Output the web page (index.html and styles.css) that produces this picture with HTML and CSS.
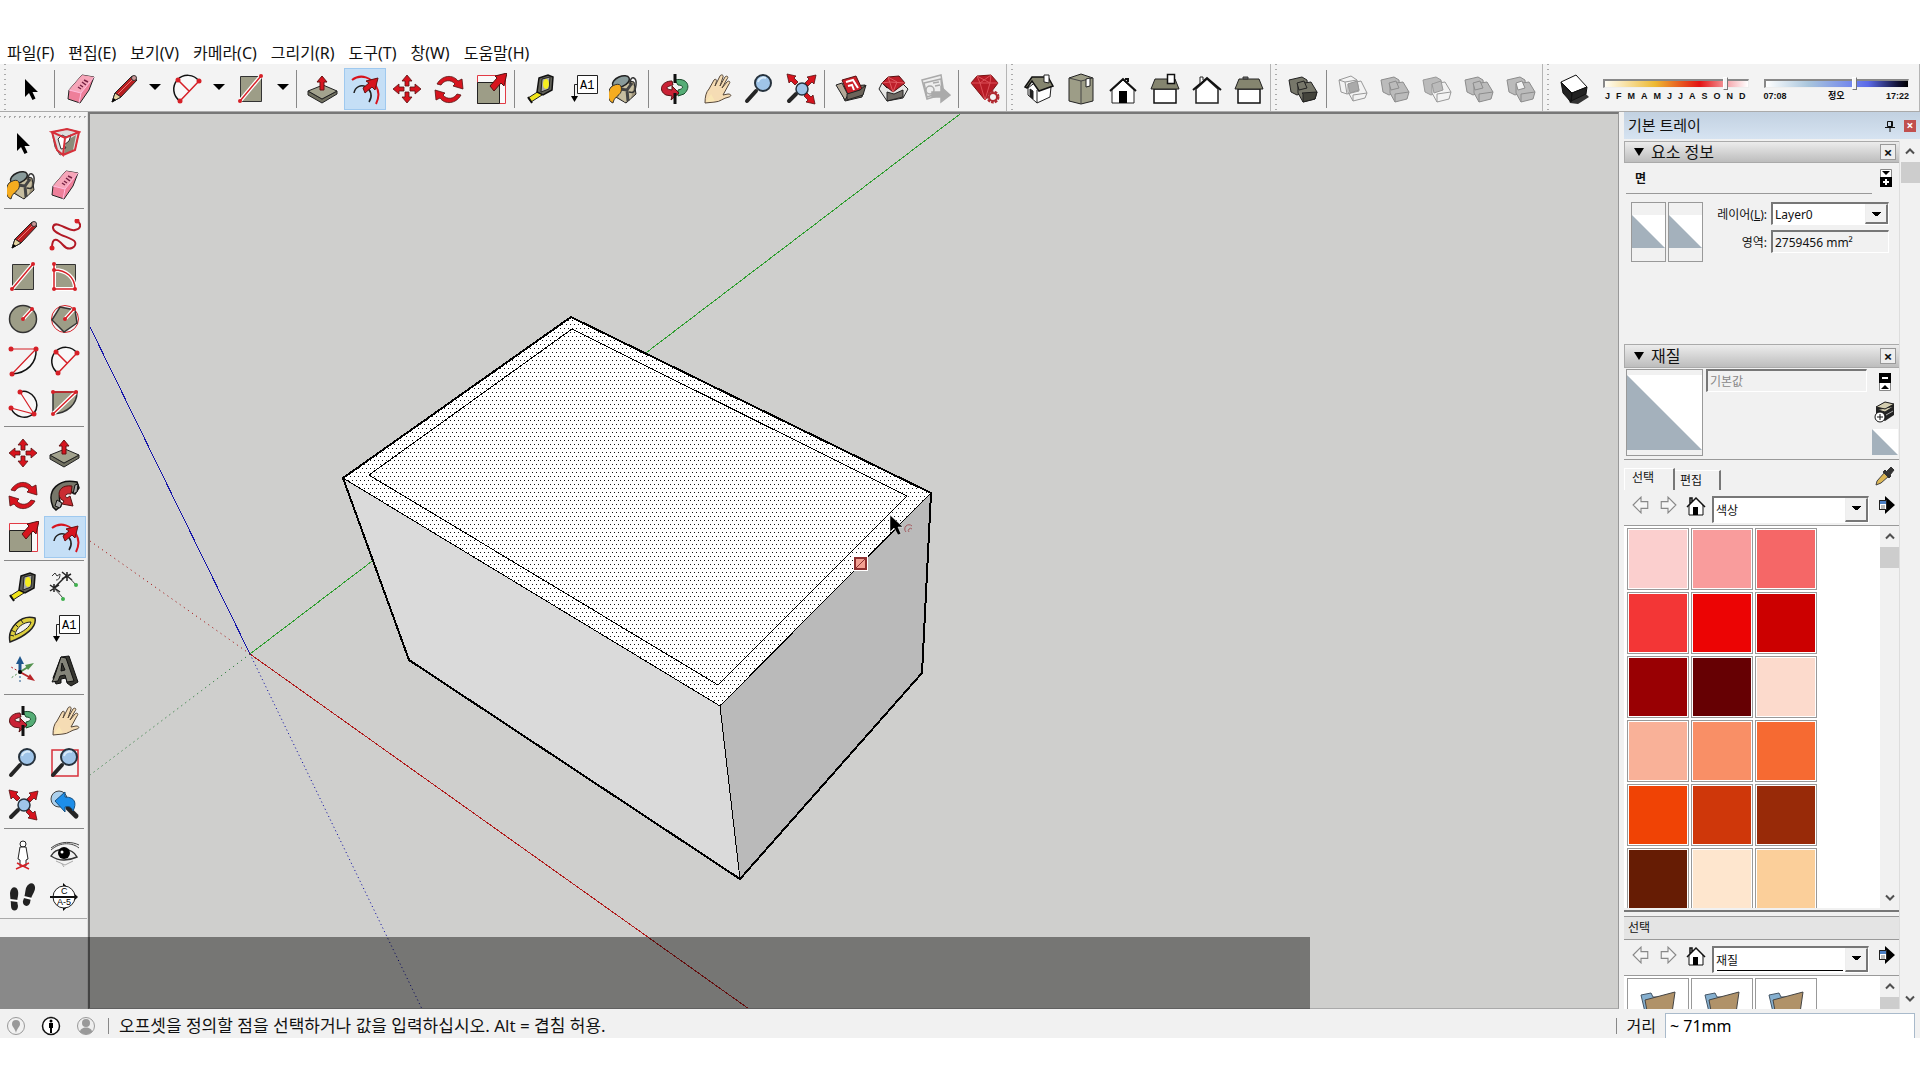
FILE: index.html
```html
<!DOCTYPE html>
<html lang="ko">
<head>
    <meta charset="UTF-8">
    <meta name="viewport" content="width=device-width, initial-scale=1.0">
    <title>SketchUp</title>
    <link rel="stylesheet" href="styles.css">
</head>
<body>
    <!-- icon sprite -->
    <svg class="sprite" aria-hidden="true">
        <symbol id="i-select" viewBox="0 0 32 32"><path d="M10 6v18l4-4 3.500 7 3-1.500-3-6.500h5.500z"/></symbol>
        <symbol id="i-eraser" viewBox="0 0 32 32">
            <path d="M4 17 17 2l12 2-5 13-9 13-12-4z" fill="#ee7f9a" stroke="#222"/>
            <path d="M4 17 17 2l12 2-13 16z" fill="#f6a6b9"/><path d="m4 17 12 3-2 10M16 20 29 4" fill="none" stroke="#fbd"/>
            <path d="m13 14 3 2m-1-4 3 2m-1-5 4 3m-2-5 4 2" stroke="#724" stroke-width="1.500"/>
        </symbol>
        <symbol id="i-pencil" viewBox="0 0 32 32">
            <path d="m5 29 3-9L25 3l5 4-16 17z" fill="#b81e20" stroke="#222"/><path d="m5 29 3-9 6 4z" fill="#e3d3a0" stroke="#222"/>
            <path d="m5 29 1.500-4 2.500 2z"/><path d="m11 21 15-15" stroke="#e77"/><circle cx="27" cy="5" r="2.500" fill="#c99" stroke="#333"/>
        </symbol>
        <symbol id="i-arc" viewBox="0 0 32 32">
            <path d="M9 28A14 14 0 1 1 28 8" fill="#fff" fill-opacity=".4" stroke="#111" stroke-width="1.500"/>
            <path d="M9 28 28 8M7 7l11 11" stroke="#d62027" stroke-width="1.500" fill="none"/>
            <g fill="#d62027"><circle cx="9" cy="28" r="2.500"/><circle cx="28" cy="8" r="2.500"/><circle cx="7" cy="7" r="2.500"/></g>
        </symbol>
        <symbol id="i-rect" viewBox="0 0 32 32">
            <path d="M5.500 3.500h21v25h-21z" fill="#9d9d87" stroke="#333"/><path d="m5 28 21-25" stroke="#fff" stroke-width="4"/>
            <path d="m5 28 21-25" stroke="#d62027" stroke-width="1.500"/><g fill="#d62027"><circle cx="5" cy="28" r="2"/><circle cx="26" cy="3" r="2"/></g>
        </symbol>
        <symbol id="i-push" viewBox="0 0 32 32">
            <path d="M1 18v4l14 8 15-9v-3l-15 8z" fill="#707060" stroke="#222"/><path d="m1 18 15-6 14 6-15 8z" fill="#a3a38e" stroke="#222"/>
            <path d="m15 3 5 6h-3v8h-4V9h-3z" fill="#d7141e" stroke="#611"/>
        </symbol>
        <symbol id="i-offset" viewBox="0 0 32 32">
            <path d="M3 7C12 0 23 5 27 13c3 5 3 12 0 18" fill="none" stroke="#d7141e" stroke-width="2"/>
            <path d="M5 20c1-6 7-9 12-6s7 9 3 15" fill="none" stroke="#222" stroke-width="1.500"/>
            <path d="m14 15 6-5-3-2 12-3-3 12-3-3-7 6z" fill="#d7141e" stroke="#611"/>
        </symbol>
        <symbol id="i-move" viewBox="0 0 32 32">
            <g fill="#d7141e" stroke="#511" stroke-width=".8"><path id="mv" d="m16 2 5 6h-3v5h-4V8h-3z"/><use href="#mv" transform="rotate(90 16 16)"/><use href="#mv" transform="rotate(180 16 16)"/><use href="#mv" transform="rotate(270 16 16)"/></g>
        </symbol>
        <symbol id="i-rotate" viewBox="0 0 32 32">
            <g fill="#d7141e" stroke="#511" stroke-width=".8"><path id="rt" d="M4 11C9 2 20 1 25 8l4-2 1 10-10-3 2-2C18 6 11 7 8 12z"/><use href="#rt" transform="rotate(180 16 16.500)"/></g>
        </symbol>
        <symbol id="i-scale" viewBox="0 0 32 32">
            <path d="M2.500 2.500h28v28h-28z" fill="#fff" fill-opacity=".5" stroke="#e23b45"/><path d="M2.500 9.500h22v21h-22z" fill="#9d9d87" stroke="#222"/>
            <path d="m15 13 7-8-2-2 12-3-3 13-3-3-7 8z" fill="#d7141e" stroke="#511"/>
        </symbol>
        <symbol id="i-tape" viewBox="0 0 32 32">
            <path d="M3 25 14 18l3 4L6 29z" fill="#f0e419" stroke="#222"/><path d="m14 5 9-3 5 2-1 13-9 5-6-3z" fill="#606057" stroke="#111" stroke-width="1.500"/>
            <path d="m17 6 8-2-1 12-8 3z" fill="#aaa" stroke="#222"/><ellipse cx="21" cy="11" rx="3" ry="5" fill="#f5ed20"/><path d="m3 24 4 6" stroke="#111" stroke-width="2"/>
        </symbol>
        <symbol id="i-text" viewBox="0 0 32 32">
            <path d="M10.500 2.500h20v18h-20z" fill="#fff" stroke="#222"/><path d="M10 11.500H7.500V26" fill="none" stroke="#222"/><path d="M4 23h7l-3.500 6z"/>
            <text x="13" y="16" class="icon-letters">A1</text>
        </symbol>
        <symbol id="i-paint" viewBox="0 0 32 32">
            <g transform="translate(-3 1)">
                <path d="m14 5 14 3 2 12-10 9-12-7z" fill="#9d9278" stroke="#222"/><path d="M20 9 28 12 25 24l-6 4-7-5z" fill="#c7bea0"/><path d="m13 15 8 1 5-7m-5 7 1 11" fill="none" stroke="#444" stroke-width="3"/>
                <ellipse cx="15" cy="8" rx="9" ry="5" transform="rotate(-24 14 8)" fill="#899b9b" stroke="#222" stroke-width="1.500"/>
                <path d="M5 13c7-5 12-3 10 5-2 4-7 5-8 11-6-2-6-11-2-16z" fill="#f6ac1f" stroke="#333"/><path d="M24 10c0-10 7-7 6 1s-3 8-7 7" fill="none" stroke="#333" stroke-width="1.500"/>
            </g>
        </symbol>
        <symbol id="i-orbit" viewBox="0 0 32 32">
            <path d="M16 7c12-3 17 7 9 14l-6 2v-6c6-1 6-5 0-5z" fill="#55ad76" stroke="#174a29"/>
            <path d="M13 8C2 8-1 18 7 22l6 1-1 4 8-7-7-7v4c-7-1-7-3 1-5z" fill="#c92235" stroke="#511"/>
            <path d="M16 1v9m0 10v11" stroke="#111" stroke-width="3"/>
        </symbol>
        <symbol id="i-pan" viewBox="0 0 32 32">
            <path d="M4 30c0-6 1-11 4-14l5-9c2-2 3 0 2 3l-1 3 5-10c1-2 4-1 3 1l-3 9 5-9c2-2 4 0 2 2l-5 9 5-6c2-2 4 0 2 2l-6 11 5-1c3 0 4 2 1 3-6 1-9 5-14 5z" fill="#f5dcb4" stroke="#554739"/><path d="m5 29 9-1-4-7z" fill="#f9e6b4"/>
        </symbol>
        <symbol id="i-zoom" viewBox="0 0 32 32">
            <path d="m4 28 9-10" stroke="#252525" stroke-width="4" stroke-linecap="round"/><circle cx="20" cy="10" r="8" fill="#9fc4e8" stroke="#26323d" stroke-width="2"/><path d="M15 9c1-4 5-5 8-4" fill="none" stroke="#d8ebfa" stroke-width="2"/>
        </symbol>
        <symbol id="i-extents" viewBox="0 0 32 32">
            <path d="m4 28 7-7" stroke="#252525" stroke-width="4" stroke-linecap="round"/><circle cx="17" cy="16" r="6" fill="#9fc4e8" stroke="#26323d" stroke-width="1.500"/>
            <g fill="#d7141e" stroke="#511" stroke-width=".8"><path id="ex" d="m31 2-2 9-2-2-4 4-3-3 4-4-2-2z"/><use href="#ex" transform="rotate(90 16 16)"/><use href="#ex" transform="rotate(-90 16 16)"/></g>
        </symbol>
        <symbol id="i-warehouse" viewBox="0 0 32 32">
            <path d="m4 14 6 14 17-4 3-12z" fill="#796e62" stroke="#222"/><path d="m7 7 14-4 6 13-14 6z" fill="#cc2029" stroke="#511"/><path d="m11 9 7-2 5 8M13 13l4-1 2 5" fill="none" stroke="#fff" stroke-width="2"/>
            <path d="m1 12 6-2 6 12-3 5z" fill="#b4a998" stroke="#222"/><path d="m12 21 13-4 6-5-3 10-16 5z" fill="#6c645a" stroke="#222"/>
        </symbol>
        <symbol id="i-extwarehouse" viewBox="0 0 32 32">
            <path d="m2 16 3-6 5 5 14-6 7 7-5 9-16 3z" fill="#e7e7e5" stroke="#222"/><path d="m5 10 6-6 11-1 6 7-12 9z" fill="#bf1f2a" stroke="#511"/><path d="m5 10 8-1 15 1M11 4l5 15 4-10z" fill="none" stroke="#e0595f"/>
            <path d="m10 19 7 2 9-4v7l-16 4z" fill="#6f6a64" stroke="#222"/>
        </symbol>
        <symbol id="i-layout" viewBox="0 0 32 32">
            <g fill="#eee" stroke="#aaa" stroke-width="1.500"><path d="m3 7 19-5 3 19-17 5z"/><path d="m5 10 17-4 1 13-15 5z"/><circle cx="11" cy="17" r="4"/><path d="m14 10 6-1m-4 4 5-1"/><path d="M13 19h9v-5l9 8-9 7v-5h-9z" fill="#aaa"/></g>
        </symbol>
        <symbol id="i-gem" viewBox="0 0 32 32">
            <path d="m2 10 6-7 14-1 7 8-13 17z" fill="#b61b25" stroke="#711"/><path d="M2 10h27M8 3l3 7 5 17 5-17 1-8M8 3l13 7M22 2 11 10" fill="none" stroke="#dc5058"/>
            <circle cx="24" cy="24" r="5" fill="#f2f2f2" stroke="#b02a31" stroke-width="3" stroke-dasharray="2.500 1"/><circle cx="24" cy="24" r="4" fill="none" stroke="#b02a31" stroke-width="2"/>
        </symbol>
        <symbol id="i-iso" viewBox="0 0 32 32">
            <path d="m5 15 9-7 14 6-1 10-13 6-9-8z" fill="#fff" stroke="#222"/><path d="M14 17v13M7 16l3 2v8l-3-3z" fill="#222" stroke="#222"/>
            <path d="M2 14 9 4h16l5 9-14 5-7-10-5 7z" fill="#85856f" stroke="#111" stroke-width="1.500"/><path d="M21 2h5v8l-5-1z" fill="#fff" stroke="#222"/>
        </symbol>
        <symbol id="i-top" viewBox="0 0 32 32"><path d="m4 5 12-4 12 4v23l-12 3-12-3z" fill="#9d9d87" stroke="#222"/><path d="m4 5 12 3v23m0-23 12-3" fill="none" stroke="#444"/><path d="m21 6 4-1v8l-4 1z" fill="#fff" stroke="#222"/></symbol>
        <symbol id="i-front" viewBox="0 0 32 32"><path d="M5 17 16 7l11 10v13H5z" fill="#fff" stroke="#222"/><path d="m3 18 13-12 13 12M21 9V6h-3" fill="none" stroke="#111" stroke-width="2"/><path d="M12 18h8v12h-8z"/></symbol>
        <symbol id="i-right" viewBox="0 0 32 32"><path d="M5 16h22v14H5z" fill="#fff" stroke="#111" stroke-width="1.500"/><path d="M6 6h20l4 10H2z" fill="#85856f" stroke="#222"/><path d="M18.500 1.500h7v9h-7z" fill="#fff" stroke="#111" stroke-width="1.500"/></symbol>
        <symbol id="i-back" viewBox="0 0 32 32"><path d="M5 16 16 6l11 10v14H5z" fill="#fff" stroke="#222" stroke-width="1.500"/><path d="m2 17 14-12 14 12" fill="none" stroke="#111" stroke-width="2"/><path d="M9 10V4h3v3" fill="#fff" stroke="#222"/></symbol>
        <symbol id="i-left" viewBox="0 0 32 32"><path d="M5 16h22v14H5z" fill="#fff" stroke="#111" stroke-width="1.500"/><path d="M6 6h20l4 10H2z" fill="#85856f" stroke="#222"/><path d="M10 4h5v2h-5z" fill="#777" stroke="#333"/></symbol>
        <symbol id="i-solid" viewBox="0 0 32 32"><g stroke="#222" fill="#77776a"><path d="m2 7 13-3 5 3 1 11-11 4-6-3z"/><path d="m11 11 13-2 6 10-2 7-12 3-5-9z"/><path d="m16 21-1-1 15-1-2 7-12 3z" fill="#44443c"/><path d="m10 10 7-2 3 7-8 2z"/></g></symbol>
        <symbol id="i-solid-wire" viewBox="0 0 32 32"><g stroke="#999" fill="none"><path d="m2 7 12-4 6 4 2 11-12 3-6-2zM2 7l6 2 12-2M8 9l2 12"/><path d="m11 11 13-3 6 12-2 5-12 3-5-9zM16 22l14-2M16 22v6"/><path d="m11 11 9-3 2 9-9 3z" fill="#aaa"/></g></symbol>
        <symbol id="i-solid-gray" viewBox="0 0 32 32"><g stroke="#8c8c8c" fill="#bbb"><path d="m2 7 13-3 5 3 1 11-11 4-6-3z"/><path d="m11 11 13-2 6 10-2 7-12 3-5-9z"/><path d="m16 21 14-2M16 21v8M10 10l7-2 3 7-8 2z"/></g></symbol>
        <symbol id="i-solid-hole" viewBox="0 0 32 32"><g stroke="#8c8c8c" fill="#bbb"><path d="m2 7 13-3 5 3 1 11-11 4-6-3z"/><path d="m11 11 13-2 6 10-2 7-12 3-5-9z"/><path d="m16 21 14-2M16 21v8"/><path d="m11 10 6-2 3 7-7 2z" fill="#f3f3f3"/></g></symbol>
        <symbol id="i-solid-cut" viewBox="0 0 32 32"><g stroke="#999" fill="#bbb"><path d="m2 7 13-3 5 3 1 11-11 4-6-3z"/><path d="m11 11 13-2 6 10-2 7-12 3-5-9z" fill="#f3f3f3"/><path d="m11 11 9-3 2 9-9 3zM16 21l14-2M16 21v8"/></g></symbol>
        <symbol id="i-shadow" viewBox="0 0 32 32"><path d="m2 10 9 20 8 1 11-7-5-5-12-1z" fill="#333"/><path d="m2 9 15-7 11 12-15 6z" fill="#fff" stroke="#111"/><path d="m2 9 2 11 8 9 1-8zM13 20l15-6-1 7-15 7z" fill="#222" stroke="#111"/></symbol>
        <symbol id="i-component" viewBox="0 0 32 32"><path d="m3 5 15-3 12 3-4 18-15 5-5-8z" fill="#ddd" stroke="#555"/><path d="m17 14 10-6-3 15-9 4z" fill="#8b8b79"/><path d="m9 12 4-4 4 2 5-2-2 6-5 4 2 3-5 1z" fill="#fff" stroke="#333"/><path d="m3 5 15-3 12 3-14 6zM3 5l5 18 6 5 2-17M30 5l-4 18-12 5" fill="none" stroke="#d7303a" stroke-width="2"/></symbol>
        <symbol id="i-freehand" viewBox="0 0 32 32"><path d="M3 29C3 18 8 19 14 26s14 2 12-3S3 16 4 8c2-8 16 5 22 3 6-1 7-6 2-9" fill="none" stroke="#b21925" stroke-width="2"/><g fill="#d62027"><circle cx="3" cy="29" r="2.500"/><circle cx="28" cy="2" r="2.500"/></g></symbol>
        <symbol id="i-rrect" viewBox="0 0 32 32"><path d="M5.500 3.500h21v25h-21z" fill="#9d9d87" stroke="#333"/><path d="M5 3v25h21M5 9c12 0 21 7 21 19" fill="none" stroke="#fff" stroke-width="4"/><path d="M5 3v25h21M5 9c12 0 21 7 21 19" fill="none" stroke="#d62027" stroke-width="1.500"/><g fill="#d62027"><circle cx="5" cy="3" r="2"/><circle cx="5" cy="9" r="2"/><circle cx="5" cy="28" r="2"/><circle cx="26" cy="28" r="2"/></g></symbol>
        <symbol id="i-circle" viewBox="0 0 32 32"><circle cx="16" cy="16" r="13.500" fill="#9d9d87" stroke="#333" stroke-width="1.500"/><path d="m16 16 9-10" stroke="#fff" stroke-width="4"/><path d="m16 16 9-10" stroke="#d62027" stroke-width="1.500"/><g fill="#d62027"><circle cx="16" cy="16" r="2"/><circle cx="25" cy="6" r="2"/></g></symbol>
        <symbol id="i-polygon" viewBox="0 0 32 32"><circle cx="16" cy="16" r="13.500" fill="none" stroke="#d62027"/><path d="m11 4 15 3 2 13-13 9L3 17z" fill="#9d9d87" stroke="#333" stroke-width="1.500"/><path d="m16 16 9-10" stroke="#fff" stroke-width="4"/><path d="m16 16 9-10" stroke="#d62027" stroke-width="1.500"/><g fill="#d62027"><circle cx="16" cy="16" r="2"/><circle cx="25" cy="6" r="2"/></g></symbol>
        <symbol id="i-arc2" viewBox="0 0 32 32"><path d="M29 4c1 14-9 24-24 25" fill="#fff" fill-opacity=".4" stroke="#111" stroke-width="1.500"/><path d="M4 4h25L5 29" fill="none" stroke="#d62027" stroke-width="1.200"/><g fill="#d62027"><circle cx="4" cy="4" r="2.500"/><circle cx="29" cy="4" r="2.500"/><circle cx="5" cy="29" r="2.500"/></g></symbol>
        <symbol id="i-arc3" viewBox="0 0 32 32"><path d="M13 5c12-4 22 12 14 21-7 7-19 5-23-5" fill="#fff" fill-opacity=".4" stroke="#111" stroke-width="1.500"/><path d="M13 5l14 22L4 21" fill="none" stroke="#d62027" stroke-width="1.200"/><g fill="#d62027"><circle cx="13" cy="5" r="2.500"/><circle cx="4" cy="21" r="2.500"/><circle cx="27" cy="27" r="2.500"/></g></symbol>
        <symbol id="i-pie" viewBox="0 0 32 32"><path d="M4 5h24c0 12-9 21-24 22z" fill="#9d9d87" stroke="#333" stroke-width="1.500"/><path d="M27 5 4 27" fill="none" stroke="#fff" stroke-width="4"/><path d="M4 5h23L4 27" fill="none" stroke="#d62027" stroke-width="1.500"/><g fill="#d62027"><circle cx="4" cy="5" r="2"/><circle cx="27" cy="5" r="2"/><circle cx="4" cy="27" r="2"/></g></symbol>
        <symbol id="i-follow" viewBox="0 0 32 32"><path d="M4 28C-3 11 10-1 28 3l2 6-4 6-9-5c-7 2-8 7-5 17l-5 4z" fill="#77776a" stroke="#111" stroke-width="1.500"/><path d="m6 27 2-6 5 3-2 5zM26 6l3-1-1 8-4 2z" fill="#aaa" stroke="#111"/><path d="M23 7C8 5 7 19 15 22l-2 3 11 2-3-10-3 2c-3-2-1-5 4-4z" fill="#c92c32" stroke="#511"/></symbol>
        <symbol id="i-dimension" viewBox="0 0 32 32"><path d="m5 17 13-13M1 14l10 7M1 20l9-6M5 13v8M13 1l10 8M13 8l9-5M18 1v9" stroke="#222" stroke-width="1.500"/><path d="m5 17 9 10M18 4l9 10" stroke="#444"/><g fill="#3fb04e"><circle cx="14" cy="28" r="2"/><circle cx="27" cy="14" r="2"/></g><path d="m3 5 3-3 2 3 3-2c0 5-2 6-4 6" fill="none" stroke="#333"/></symbol>
        <symbol id="i-protractor" viewBox="0 0 32 32"><path d="M3 29C0 15 14 1 28 5c2 9-9 18-25 24z" fill="#dcce3d" stroke="#222" stroke-width="1.500"/><path d="M8 22c1-7 8-13 16-13-1 5-8 10-16 13z" fill="#f2f2f2" stroke="#222"/><path d="m3 22 4 1m-3-6 4 2m0-8 3 3m3-7 2 3" stroke="#222"/></symbol>
        <symbol id="i-axes" viewBox="0 0 32 32"><path d="M13 17V7" stroke="#1e568d" stroke-width="3"/><path d="m9 9 4-8 4 8z" fill="#1e568d"/><path d="m13 17 8-5" stroke="#53924e" stroke-width="2"/><path d="m18 10 9-2-6 7z" fill="#53924e"/><path d="m13 17 9 5" stroke="#b82428" stroke-width="2"/><path d="m20 24 3-5 5 7z" fill="#b82428"/><path d="M13 17v12" stroke="#1e568d" stroke-dasharray="2 2"/><path d="M13 17 4 12" stroke="#b82428" stroke-dasharray="2 2"/><path d="m13 17-9 6" stroke="#53924e" stroke-dasharray="2 2"/><circle cx="13" cy="17" r="2"/></symbol>
        <symbol id="i-text3d" viewBox="0 0 32 32"><path d="m4 23 8-21 8-1 9 26-7 4-4-3-1-5-5 1v4l-5 1z" fill="#35352f" stroke="#111"/><path d="m5 23 7-21 5 1 8 23-7 1-2-7-5 1-2 5-6 1zM12 16l4-1-3-7z" fill="#85857a" stroke="#111" fill-rule="evenodd"/></symbol>
        <symbol id="i-zoomwin" viewBox="0 0 32 32"><path d="M3 3h26v26H3z" fill="none" stroke="#d7303a" stroke-width="1.500"/><path d="m4 28 9-10" stroke="#252525" stroke-width="4" stroke-linecap="round"/><circle cx="20" cy="10" r="8" fill="#9fc4e8" stroke="#26323d" stroke-width="2"/><path d="M15 9c1-4 5-5 8-4" fill="none" stroke="#d8ebfa" stroke-width="2"/></symbol>
        <symbol id="i-previous" viewBox="0 0 32 32"><path d="m19 19 8 8" stroke="#252525" stroke-width="5" stroke-linecap="round"/><circle cx="10" cy="10" r="8" fill="#acd0ec" stroke="#444"/><path d="m6 12 10-9v5c10 0 12 6 8 14-2-5-5-5-8-4v5z" fill="#1d8ee9" stroke="#145082"/></symbol>
        <symbol id="i-person" viewBox="0 0 32 32"><circle cx="16" cy="5" r="3" fill="#fff" stroke="#222"/><path d="m13 8-2 12 2 1v6h6v-6l2-1-2-12z" fill="#fff" stroke="#222"/><path d="m9 30 13-6M10 24l12 6" stroke="#d62027" stroke-width="1.500"/></symbol>
        <symbol id="i-eye" viewBox="0 0 32 32"><path d="M2 11C12 2 24 4 30 9M2 9C12 1 24 3 30 6" fill="none" stroke="#444"/><path d="M2 17C7 8 23 8 28 18c-9 4-17 5-26-1z" fill="#eee" stroke="#333" stroke-width="1.500"/><circle cx="15" cy="14" r="6"/><circle cx="13" cy="13" r="1.500" fill="#fff"/><path d="m7 22 9 4 8-4M15 28l-2-3" fill="none" stroke="#aaa"/></symbol>
        <symbol id="i-walk" viewBox="0 0 32 32"><g fill="#222"><path d="M3 12C4 3 13 5 11 15c-1 4-1 6 0 10 0 6-7 6-7 0 0-5-1-9-1-13z"/><path d="M19 7c4-9 12-4 8 4-3 6-3 6-4 11-2 5-8 3-7-2 2-5 2-9 3-13z"/></g><path d="m3 19 8 1M17 16l8 2" stroke="#fff" stroke-width="2"/></symbol>
        <symbol id="i-section" viewBox="0 0 32 32"><path d="m14 2 15 14-15 14z"/><circle cx="15" cy="16" r="11" fill="#fff" stroke="#222"/><path d="M1 16h27" stroke="#111" stroke-width="2"/><text x="12" y="13" class="tiny-letters">C</text><text x="8" y="24" class="tiny-letters">A-5</text></symbol>
        <symbol id="i-home" viewBox="0 0 20 20"><path d="M3 9v10h14V9l-7-7z" fill="#fff" stroke="#111"/><path d="m1 11 9-9 9 9M4 8V2h2v4" fill="none" stroke="#111" stroke-width="1.500"/><path d="M7 11h5v8H7z"/></symbol>
        <symbol id="i-prev" viewBox="0 0 16 16"><path d="m1 8 7-7v4h6v6H8v4z" fill="#f5f5f5" stroke="#888"/></symbol>
        <symbol id="i-next" viewBox="0 0 16 16"><path d="M15 8 8 1v4H2v6h6v4z" fill="#f5f5f5" stroke="#888"/></symbol>
        <symbol id="i-details" viewBox="0 0 18 18"><path d="M7 0v4H1v10h6v4l10-9z"/><path d="M1.500 4.500h7v9h-7z" fill="#fff" stroke="#222"/><path d="M2 5h6v3H2z" fill="#4b7fc4"/><path d="M3 10h4m-4 2h4" stroke="#777"/></symbol>
        <symbol id="i-up" viewBox="0 0 12 12"><path d="m2 8 4-4 4 4" fill="none" stroke="#505050" stroke-width="2"/></symbol>
        <symbol id="i-down" viewBox="0 0 12 12"><path d="m2 4 4 4 4-4" fill="none" stroke="#505050" stroke-width="2"/></symbol>
        <symbol id="i-folder" viewBox="0 0 40 40"><path d="m3 6 10-2 2 4h6v28H10z" fill="#85afcf" stroke="#456"/><path d="m7 11 30-8-5 35H12z" fill="#b09269" stroke="#444"/></symbol>
    </svg>

    <div class="app">
        <nav class="menubar">
            <button>파일(F)</button>
            <button>편집(E)</button>
            <button>보기(V)</button>
            <button>카메라(C)</button>
            <button>그리기(R)</button>
            <button>도구(T)</button>
            <button>창(W)</button>
            <button>도움말(H)</button>
        </nav>

        <header class="toolbars">
            <div class="toolbar">
                <button class="tool" aria-label="선택"><svg><use href="#i-select"/></svg></button>
                <span class="sep"></span>
                <button class="tool" aria-label="지우기"><svg><use href="#i-eraser"/></svg></button>
                <button class="tool" aria-label="선"><svg><use href="#i-pencil"/></svg></button>
                <button class="more" aria-label="선 도구 더 보기"></button>
                <button class="tool" aria-label="호"><svg><use href="#i-arc"/></svg></button>
                <button class="more" aria-label="호 도구 더 보기"></button>
                <button class="tool" aria-label="직사각형"><svg><use href="#i-rect"/></svg></button>
                <button class="more" aria-label="도형 더 보기"></button>
                <span class="sep"></span>
                <button class="tool" aria-label="밀기/끌기"><svg><use href="#i-push"/></svg></button>
                <button class="tool active" aria-label="오프셋"><svg><use href="#i-offset"/></svg></button>
                <button class="tool" aria-label="이동"><svg><use href="#i-move"/></svg></button>
                <button class="tool" aria-label="회전"><svg><use href="#i-rotate"/></svg></button>
                <button class="tool" aria-label="배율"><svg><use href="#i-scale"/></svg></button>
                <span class="sep"></span>
                <button class="tool" aria-label="줄자"><svg><use href="#i-tape"/></svg></button>
                <button class="tool" aria-label="텍스트"><svg><use href="#i-text"/></svg></button>
                <button class="tool" aria-label="페인트통"><svg><use href="#i-paint"/></svg></button>
                <span class="sep"></span>
                <button class="tool" aria-label="궤도"><svg><use href="#i-orbit"/></svg></button>
                <button class="tool" aria-label="이동 보기"><svg><use href="#i-pan"/></svg></button>
                <button class="tool" aria-label="확대/축소"><svg><use href="#i-zoom"/></svg></button>
                <button class="tool" aria-label="전체 보기"><svg><use href="#i-extents"/></svg></button>
                <span class="sep"></span>
                <button class="tool" aria-label="3D Warehouse"><svg><use href="#i-warehouse"/></svg></button>
                <button class="tool" aria-label="Extension Warehouse"><svg><use href="#i-extwarehouse"/></svg></button>
                <button class="tool" aria-label="LayOut" disabled><svg><use href="#i-layout"/></svg></button>
                <span class="sep"></span>
                <button class="tool" aria-label="확장 관리자"><svg><use href="#i-gem"/></svg></button>
            </div>
            <div class="toolbar">
                <button class="tool" aria-label="등각 투영"><svg><use href="#i-iso"/></svg></button>
                <button class="tool" aria-label="상단"><svg><use href="#i-top"/></svg></button>
                <button class="tool" aria-label="전면"><svg><use href="#i-front"/></svg></button>
                <button class="tool" aria-label="오른쪽"><svg><use href="#i-right"/></svg></button>
                <button class="tool" aria-label="후면"><svg><use href="#i-back"/></svg></button>
                <button class="tool" aria-label="왼쪽"><svg><use href="#i-left"/></svg></button>
            </div>
            <div class="toolbar">
                <button class="tool" aria-label="외곽 셸"><svg><use href="#i-solid"/></svg></button>
                <span class="sep"></span>
                <button class="tool" aria-label="교차" disabled><svg><use href="#i-solid-wire"/></svg></button>
                <button class="tool" aria-label="결합" disabled><svg><use href="#i-solid-gray"/></svg></button>
                <button class="tool" aria-label="빼기" disabled><svg><use href="#i-solid-cut"/></svg></button>
                <button class="tool" aria-label="다듬기" disabled><svg><use href="#i-solid-gray"/></svg></button>
                <button class="tool" aria-label="분할" disabled><svg><use href="#i-solid-hole"/></svg></button>
            </div>
            <div class="toolbar shadows">
                <button class="tool" aria-label="그림자"><svg><use href="#i-shadow"/></svg></button>
                <div class="slider">
                    <input class="month" type="range" min="0" max="100" value="86" aria-label="날짜">
                    <div class="ticks"><span>J</span><span>F</span><span>M</span><span>A</span><span>M</span><span>J</span><span>J</span><span>A</span><span>S</span><span>O</span><span>N</span><span>D</span></div>
                </div>
                <div class="slider">
                    <input class="hour" type="range" min="0" max="100" value="63" aria-label="시간">
                    <div class="ticks"><span>07:08</span><span>정오</span><span>17:22</span></div>
                </div>
            </div>
        </header>

        <main class="workspace">
            <aside class="palette">
                <div class="tools">
                    <button class="tool" aria-label="선택"><svg><use href="#i-select"/></svg></button>
                    <button class="tool" aria-label="구성 요소 만들기"><svg><use href="#i-component"/></svg></button>
                    <button class="tool" aria-label="페인트통"><svg><use href="#i-paint"/></svg></button>
                    <button class="tool" aria-label="지우기"><svg><use href="#i-eraser"/></svg></button>
                    <hr>
                    <button class="tool" aria-label="선"><svg><use href="#i-pencil"/></svg></button>
                    <button class="tool" aria-label="프리핸드"><svg><use href="#i-freehand"/></svg></button>
                    <button class="tool" aria-label="직사각형"><svg><use href="#i-rect"/></svg></button>
                    <button class="tool" aria-label="회전된 직사각형"><svg><use href="#i-rrect"/></svg></button>
                    <button class="tool" aria-label="원"><svg><use href="#i-circle"/></svg></button>
                    <button class="tool" aria-label="다각형"><svg><use href="#i-polygon"/></svg></button>
                    <button class="tool" aria-label="호"><svg><use href="#i-arc2"/></svg></button>
                    <button class="tool" aria-label="2점 호"><svg><use href="#i-arc"/></svg></button>
                    <button class="tool" aria-label="3점 호"><svg><use href="#i-arc3"/></svg></button>
                    <button class="tool" aria-label="파이"><svg><use href="#i-pie"/></svg></button>
                    <hr>
                    <button class="tool" aria-label="이동"><svg><use href="#i-move"/></svg></button>
                    <button class="tool" aria-label="밀기/끌기"><svg><use href="#i-push"/></svg></button>
                    <button class="tool" aria-label="회전"><svg><use href="#i-rotate"/></svg></button>
                    <button class="tool" aria-label="따라가기"><svg><use href="#i-follow"/></svg></button>
                    <button class="tool" aria-label="배율"><svg><use href="#i-scale"/></svg></button>
                    <button class="tool active" aria-label="오프셋"><svg><use href="#i-offset"/></svg></button>
                    <hr>
                    <button class="tool" aria-label="줄자"><svg><use href="#i-tape"/></svg></button>
                    <button class="tool" aria-label="치수"><svg><use href="#i-dimension"/></svg></button>
                    <button class="tool" aria-label="각도기"><svg><use href="#i-protractor"/></svg></button>
                    <button class="tool" aria-label="텍스트"><svg><use href="#i-text"/></svg></button>
                    <button class="tool" aria-label="축"><svg><use href="#i-axes"/></svg></button>
                    <button class="tool" aria-label="3D 텍스트"><svg><use href="#i-text3d"/></svg></button>
                    <hr>
                    <button class="tool" aria-label="궤도"><svg><use href="#i-orbit"/></svg></button>
                    <button class="tool" aria-label="이동 보기"><svg><use href="#i-pan"/></svg></button>
                    <button class="tool" aria-label="확대/축소"><svg><use href="#i-zoom"/></svg></button>
                    <button class="tool" aria-label="창 확대/축소"><svg><use href="#i-zoomwin"/></svg></button>
                    <button class="tool" aria-label="전체 보기"><svg><use href="#i-extents"/></svg></button>
                    <button class="tool" aria-label="이전"><svg><use href="#i-previous"/></svg></button>
                    <hr>
                    <button class="tool" aria-label="카메라 배치"><svg><use href="#i-person"/></svg></button>
                    <button class="tool" aria-label="둘러보기"><svg><use href="#i-eye"/></svg></button>
                    <button class="tool" aria-label="걷기"><svg><use href="#i-walk"/></svg></button>
                    <button class="tool" aria-label="단면"><svg><use href="#i-section"/></svg></button>
                </div>
            </aside>

            <section class="viewport">
                <svg class="scene">
                    <defs>
                        <pattern id="dots" width="4" height="8" patternUnits="userSpaceOnUse">
                            <path d="M0 0h1v1H0zM2 4h1v1H2z" fill="#111" shape-rendering="crispEdges"/>
                        </pattern>
                    </defs>
                    <g transform="translate(-90 -114)">
                        <!-- axes -->
                        <g fill="none" stroke-width="1" shape-rendering="crispEdges">
                            <path d="M250 654 960 114" stroke="#2f9e2f"/>
                            <path d="M250 654 749 1009" stroke="#b01c1c"/>
                            <path d="M250 654 90 327" stroke="#1717a8"/>
                        </g>
                        <g fill="none" stroke-width="1">
                            <path d="M250 654 90 775" stroke="#0a6a1c" stroke-dasharray="1 4"/>
                            <path d="M250 654 90 541" stroke="#a00000" stroke-dasharray="1 4"/>
                            <path d="M250 654 422 1009" stroke="#0000a0" stroke-dasharray="1 3"/>
                        </g>
                        <!-- box -->
                        <path d="M343 478 720 706 740 879 409 660z" fill="#dadada"/>
                        <path d="M720 706 931 493 922 673 740 879z" fill="#bababa"/>
                        <path d="M571 317 931 493 720 706 343 478z" fill="#fff"/>
                        <path d="M571 317 931 493 720 706 343 478z" fill="url(#dots)"/>
                        <g fill="none" stroke="#000" shape-rendering="crispEdges">
                            <path d="M572 329 907 496 718 685 369 475zM343 478 720 706 931 493M720 706l20 173"/>
                            <path d="M343 478 571 317 931 493 922 673 740 879 409 660z" stroke-width="2" stroke-linejoin="round"/>
                        </g>
                        <!-- inference mark and cursor -->
                        <path d="M853 556h15v15h-15z" fill="#fff"/>
                        <path d="M855 558h11v11h-11z" fill="#f3a092" stroke="#8e2f2f" stroke-width="2"/><path d="m856 568 9-9" stroke="#8e2f2f"/>
                        <path d="M890 515v17l4-4 4 7 3-1-3-7h5z" stroke="#fff" stroke-width=".5"/>
                        <path d="M912 526a4 4 0 0 0-6 6M912 529a2 2 0 0 0-3 3" fill="none" stroke="#a45b60"/>
                    </g>
                </svg>
            </section>

            <aside class="tray">
                <header class="tray-title">
                    <h1>기본 트레이</h1>
                    <button class="pin" aria-label="고정"><svg viewBox="0 0 12 12"><path d="M3.500 1.500h5v5h-5zM7.500 1v6M1 7.500h10M6 8v4" fill="none" stroke="#111"/></svg></button>
                    <button class="close-tray" aria-label="트레이 닫기">×</button>
                </header>
                <div class="tray-body">
                    <div class="panels">
                        <section class="entity">
                            <header class="panel-title"><h2>요소 정보</h2><button aria-label="닫기">×</button></header>
                            <div class="entity-name"><b>면</b><button class="toggle" aria-label="세부 정보"><svg viewBox="0 0 12 18"><path d="M.500.500h11v17H.500z" fill="#fff" stroke="#888"/><path d="M2 2h8L6 6zM0 8h12v10H0z"/><path d="M3 13h6M6 10v6" stroke="#fff" stroke-width="2"/></svg></button></div>
                            <div class="entity-info">
                                <div class="faces">
                                    <svg viewBox="0 0 33 58"><path d="M0 12h33v32H0z" fill="#fff"/><path d="M0 12v33h33z" fill="#a4b1bc"/></svg>
                                    <svg viewBox="0 0 33 58"><path d="M0 12h33v32H0z" fill="#fff"/><path d="M0 12v33h33z" fill="#a4b1bc"/></svg>
                                </div>
                                <div class="fields">
                                    <label for="layer">레이어(<u>L</u>):</label>
                                    <span class="combo"><select id="layer"><option>Layer0</option></select></span>
                                    <label for="area">영역:</label>
                                    <input id="area" type="text" value="2759456 mm²" readonly>
                                </div>
                            </div>
                        </section>

                        <section class="materials">
                            <header class="panel-title"><h2>재질</h2><button aria-label="닫기">×</button></header>
                            <div class="material">
                                <svg class="preview" viewBox="0 0 75 85"><path d="M0 5h75v75H0z" fill="#fff"/><path d="M0 5v75h75z" fill="#a4b1bc"/></svg>
                                <input type="text" value="기본값" aria-label="재질 이름" disabled>
                                <div class="material-actions">
                                    <button class="toggle" aria-label="보조 창"><svg viewBox="0 0 12 18"><path d="M.500.500h11v17H.500z" fill="#fff" stroke="#888"/><path d="M0 0h12v10H0zM2 16h8l-4-4z"/><path d="M3 5h6" stroke="#fff" stroke-width="2"/></svg></button>
                                    <button class="create" aria-label="재질 만들기"><svg viewBox="0 0 22 22"><path d="m3 6 9-5 9 2v11l-9 6-9-4z" fill="#222"/><path d="m3 6 9-5 9 2-9 5zM5 9l7 2 8-5" fill="#d4ceb0" stroke="#222"/><path d="m13 14 7-4" stroke="#aaa"/><circle cx="7" cy="16" r="5" fill="#fff" stroke="#111"/><path d="M4 16h6M7 13v6" stroke="#111"/></svg></button>
                                    <button class="default" aria-label="기본 재질"><svg viewBox="0 0 26 26"><path d="M0 0h26v26H0z" fill="#fff"/><path d="M0 0v26h26z" fill="#a4b1bc"/></svg></button>
                                </div>
                            </div>
                            <div class="tabs">
                                <button class="tab current">선택</button>
                                <button class="tab">편집</button>
                                <button class="dropper" aria-label="샘플 색칠"><svg viewBox="0 0 20 20"><path d="m1 19 1-4 8-9 4 4-8 7z" fill="#ddb755" stroke="#444"/><path d="m8 6 2-2 6 6-2 2zM12 5l4-4 3 3-4 5z" fill="#333" stroke="#333"/></svg></button>
                            </div>
                            <div class="browse">
                                <button aria-label="뒤로"><svg><use href="#i-prev"/></svg></button>
                                <button aria-label="앞으로"><svg><use href="#i-next"/></svg></button>
                                <button class="home" aria-label="모델 내"><svg><use href="#i-home"/></svg></button>
                                <span class="combo"><select aria-label="모음"><option>색상</option></select></span>
                                <button aria-label="세부 사항"><svg><use href="#i-details"/></svg></button>
                            </div>
                            <div class="list colors">
                                <div class="swatches">
                                    <button class="c1" aria-label="색상 1"></button><button class="c2" aria-label="색상 2"></button><button class="c3" aria-label="색상 3"></button>
                                    <button class="c4" aria-label="색상 4"></button><button class="c5" aria-label="색상 5"></button><button class="c6" aria-label="색상 6"></button>
                                    <button class="c7" aria-label="색상 7"></button><button class="c8" aria-label="색상 8"></button><button class="c9" aria-label="색상 9"></button>
                                    <button class="c10" aria-label="색상 10"></button><button class="c11" aria-label="색상 11"></button><button class="c12" aria-label="색상 12"></button>
                                    <button class="c13" aria-label="색상 13"></button><button class="c14" aria-label="색상 14"></button><button class="c15" aria-label="색상 15"></button>
                                    <button class="c16" aria-label="색상 16"></button><button class="c17" aria-label="색상 17"></button><button class="c18" aria-label="색상 18"></button>
                                </div>
                                <div class="scrollbar"><svg><use href="#i-up"/></svg><span class="thumb"></span><svg><use href="#i-down"/></svg></div>
                            </div>
                            <h3 class="subtitle">선택</h3>
                            <div class="browse">
                                <button aria-label="뒤로"><svg><use href="#i-prev"/></svg></button>
                                <button aria-label="앞으로"><svg><use href="#i-next"/></svg></button>
                                <button class="home" aria-label="모델 내"><svg><use href="#i-home"/></svg></button>
                                <span class="combo focused"><select aria-label="보조 모음"><option>재질</option></select></span>
                                <button aria-label="세부 사항"><svg><use href="#i-details"/></svg></button>
                            </div>
                            <div class="list folders">
                                <div class="swatches">
                                    <button aria-label="폴더 1"><svg><use href="#i-folder"/></svg></button>
                                    <button aria-label="폴더 2"><svg><use href="#i-folder"/></svg></button>
                                    <button aria-label="폴더 3"><svg><use href="#i-folder"/></svg></button>
                                </div>
                                <div class="scrollbar"><svg><use href="#i-up"/></svg><span class="thumb"></span></div>
                            </div>
                        </section>
                    </div>
                    <div class="scrollbar outer"><svg><use href="#i-up"/></svg><span class="thumb"></span><svg><use href="#i-down"/></svg></div>
                </div>
            </aside>
            <div class="caption-band"></div>
        </main>

        <footer class="statusbar">
            <button aria-label="지리 위치"><svg viewBox="0 0 20 20"><circle cx="10" cy="10" r="8.500" fill="none" stroke="#999"/><path d="M10 17c-1-5-4-6-4-9a4 4 0 0 1 8 0c0 3-3 4-4 9z" fill="#999"/></svg></button>
            <button aria-label="저작자"><svg viewBox="0 0 20 20"><circle cx="10" cy="10" r="8.500" fill="#fff" stroke="#111" stroke-width="1.500"/><circle cx="10" cy="5" r="1.500"/><path d="M8 7h4v5h-1v5H9v-5H8z"/></svg></button>
            <button aria-label="로그인"><svg viewBox="0 0 20 20"><circle cx="10" cy="10" r="8.500" fill="#eee" stroke="#999"/><circle cx="10" cy="7" r="4" fill="#999"/><path d="M4 16c0-6 12-6 12 0-3 3-9 3-12 0z" fill="#999"/></svg></button>
            <p>오프셋을 정의할 점을 선택하거나 값을 입력하십시오. Alt = 겹침 허용.</p>
            <label for="distance">거리</label>
            <input id="distance" type="text" value="~ 71mm">
        </footer>
    </div>
</body>
</html>
```
FILE: styles.css
```css
* {
    box-sizing: border-box;
}
body {
    margin: 0;
    background-color: #fff;
    color: #111;
    font-family: "Noto Sans", "Noto Sans CJK KR", sans-serif;
    font-size: 16px;
}
h1, h2, h3, p {
    margin: 0;
    font-weight: normal;
}
button {
    padding: 0;
    border: none;
    background: none;
    color: inherit;
    font: inherit;
}
svg {
    display: block;
}
.sprite {
    display: none;
}
.icon-letters {
    font: 12px "Liberation Mono", monospace;
}
.tiny-letters {
    font: 9px "Liberation Sans", sans-serif;
}
.app {
    display: flex;
    flex-direction: column;
    height: 100vh;
    padding: 40px 0 42px;
}

/* menu */
.menubar {
    display: flex;
    gap: 14px;
    height: 24px;
    padding: 1px 0 0 7px;
    line-height: 24px;
}

/* toolbars */
.toolbars {
    display: flex;
    height: 48px;
    background-color: #f3f3f3;
    border-bottom: 1px solid #aaa;
}
.toolbar {
    display: flex;
    align-items: center;
    padding: 2px 0 0 10px;
    border-right: 1px solid #b5b5b5;
    background: radial-gradient(circle, #aaa 1px, transparent 1px) 3px 3px / 4px 5px repeat-y;
}
.toolbar + .toolbar {
    padding-left: 11px;
}
.tool {
    display: flex;
    align-items: center;
    justify-content: center;
    flex: none;
    width: 42px;
    height: 42px;
    border: 1px solid transparent;
}
.tool svg {
    width: 32px;
    height: 32px;
}
.tool.active {
    background-color: #c5dff6;
    border-color: #9fc9ef;
}
.more {
    width: 22px;
    height: 42px;
}
.more::before {
    content: "";
    display: block;
    margin: 0 auto 4px;
    width: 0;
    border: 6px solid transparent;
    border-top-color: #000;
    border-bottom: none;
}
.sep {
    width: 1px;
    height: 38px;
    margin: 0 5px 0 2px;
    background-color: #888;
}
.toolbar.shadows {
    flex: 1;
    gap: 15px;
    padding-right: 10px;
}
.shadows .tool {
    margin-right: -8px;
}
.slider {
    flex: 1;
}
.slider input {
    display: block;
    appearance: none;
    width: 100%;
    height: 9px;
    margin: 4px 0 1px;
    border: 1px solid #eee;
    border-top: 2px solid #888;
    border-left: 2px solid #888;
}
.slider input::-webkit-slider-thumb {
    appearance: none;
    width: 5px;
    height: 13px;
    background-color: #f5f5f5;
    border: 1px solid #fff;
    border-right-color: #777;
    border-bottom-color: #777;
}
.month {
    background: linear-gradient(to right, #fffdf5, #edb932 35%, #e31212 66%, #f7b6bb 88%, #fff);
}
.hour {
    background: linear-gradient(to right, #fff, #a9c5dc 30%, #7388ec 60%, #5a69e8 72%, #111133 93%, #000);
}
.ticks {
    display: flex;
    justify-content: space-between;
    padding: 0 3px 0 2px;
    font: bold 9px/14px "Liberation Sans", "Noto Sans CJK KR", sans-serif;
}
.hour + .ticks {
    padding: 0;
}

/* workspace */
.workspace {
    display: flex;
    flex: 1;
    min-height: 0;
    position: relative;
    background-color: #f1f1f1;
}
.palette {
    width: 88px;
    border-right: 1px solid #ddd;
}
.tools {
    display: grid;
    grid-template-columns: 42px 42px;
    padding: 10px 0 0 2px;
    border-bottom: 1px solid #aaa;
    background: radial-gradient(circle, #aaa 1px, transparent 1px) 2px 2px / 5px 5px repeat-x #f3f3f3;
}
.tools hr {
    grid-column: 1 / 3;
    width: 80px;
    height: 1px;
    margin: 2px 0 5px 2px;
    border: none;
    background-color: #888;
}
.viewport {
    flex: 1;
    min-width: 0;
    border: 2px solid #777;
    border-right: 1px solid #999;
    border-bottom: 1px solid #aaa;
    background-color: #cfcfcd;
}
.scene {
    width: 100%;
    height: 100%;
}
.caption-band {
    position: absolute;
    left: 0;
    bottom: 0;
    width: 1310px;
    max-width: 100%;
    height: 72px;
    background-color: rgba(0, 0, 0, 0.43);
}

/* tray */
.tray {
    display: flex;
    flex-direction: column;
    width: 301px;
    padding-left: 5px;
}
.tray-title {
    display: flex;
    align-items: center;
    gap: 8px;
    height: 27px;
    padding: 0 4px;
    background: linear-gradient(#c2d1e1, #d6e3f1);
}
.tray-title h1 {
    flex: 1;
    font-size: 15px;
    line-height: 24px;
    padding-bottom: 1px;
}
.pin svg {
    width: 12px;
    height: 12px;
}
.close-tray {
    width: 12px;
    height: 12px;
    background-color: #c1504f;
    color: #fff;
    font-size: 12px;
    font-weight: bold;
    line-height: 11px;
}
.tray-body {
    display: flex;
    flex: 1;
    min-height: 0;
    padding-top: 2px;
}
.panels {
    display: flex;
    flex-direction: column;
    flex: 1;
    min-height: 0;
    border-right: 1px solid #ddd;
}
.panel-title {
    display: flex;
    align-items: center;
    height: 22px;
    padding: 0 3px 0 9px;
    border: 1px solid #aaa;
    border-right: none;
    background: linear-gradient(#ececec, #bdbdbd);
}
.panel-title::before {
    content: "";
    border: 5px solid transparent;
    border-top: 8px solid #000;
    border-bottom: none;
}
.panel-title h2 {
    flex: 1;
    margin-left: 7px;
    font-size: 16px;
    line-height: 20px;
}
.panel-title button {
    width: 16px;
    height: 16px;
    border: 1px solid #999;
    background-color: #eee;
    font-size: 15px;
    font-weight: bold;
    line-height: 12px;
}
.entity {
    height: 203px;
}
.entity-name {
    display: flex;
    align-items: center;
    height: 31px;
    margin: 0 27px 0 2px;
    padding-left: 9px;
    border-bottom: 1px solid #999;
    font-size: 12px;
}
.entity-name .toggle {
    margin: 0 -20px 0 auto;
}
.toggle svg {
    width: 12px;
    height: 18px;
}
.entity-info {
    display: flex;
    justify-content: space-between;
    padding: 8px 10px 0 7px;
}
.faces {
    display: flex;
    gap: 2px;
}
.faces svg {
    width: 35px;
    height: 60px;
    border: 1px solid #999;
}
.fields {
    display: grid;
    grid-template-columns: auto 118px;
    gap: 5px 4px;
    align-content: start;
    align-items: center;
    font-size: 12px;
    text-align: right;
}
.tray input, .tray select {
    width: 100%;
    height: 23px;
    padding: 0 2px;
    border: 2px solid #777;
    border-right: 1px solid #fff;
    border-bottom: 1px solid #fff;
    border-radius: 0;
    background-color: #f1f1f1;
    color: #111;
    font: inherit;
    font-size: 12px;
}
.tray select {
    appearance: none;
    height: 100%;
    background-color: #fff;
}
.combo {
    position: relative;
    height: 23px;
}
.combo::after {
    content: "";
    position: absolute;
    top: 2px;
    right: 1px;
    bottom: 1px;
    width: 20px;
    border: 1px solid #eee;
    border-right: 2px solid #777;
    border-bottom: 2px solid #777;
    background: linear-gradient(#000, #000) center 7px / 9px 1px no-repeat, linear-gradient(#000, #000) center 8px / 7px 1px no-repeat, linear-gradient(#000, #000) center 9px / 5px 1px no-repeat, linear-gradient(#000, #000) center 10px / 3px 1px no-repeat, #f1f1f1;
    pointer-events: none;
}
.materials {
    display: flex;
    flex-direction: column;
    flex: 1;
    min-height: 0;
}
.materials .panel-title {
    height: 24px;
    flex: none;
}
.material {
    display: flex;
    flex: none;
    gap: 3px;
    height: 92px;
    padding: 1px 1px 0 2px;
    border-bottom: 1px solid #999;
}
.preview {
    flex: none;
    width: 77px;
    height: 87px;
    border: 1px solid #999;
}
.material input {
    width: 161px;
    color: #888;
}
.material-actions {
    display: flex;
    flex: 1;
    flex-direction: column;
    align-items: flex-end;
    gap: 10px;
    padding: 4px 0 0;
}
.material-actions .toggle {
    margin-right: 7px;
}
.create svg {
    width: 22px;
    height: 22px;
    margin-right: 3px;
}
.default {
    margin-top: -4px;
}
.default svg {
    width: 26px;
    height: 26px;
}
.tabs {
    display: flex;
    flex: none;
    align-items: flex-end;
    height: 30px;
    font-size: 12px;
}
.tab {
    width: 46px;
    height: 20px;
    padding-right: 12px;
    border-top: 1px solid #fff;
    border-right: 2px solid #777;
    line-height: 16px;
}
.tab.current {
    width: 51px;
    height: 22px;
    border-left: 1px solid #fff;
    padding-bottom: 4px;
}
.dropper {
    margin: 0 4px 4px auto;
}
.dropper svg {
    width: 20px;
    height: 20px;
}
.browse {
    display: flex;
    flex: none;
    align-items: flex-start;
    gap: 9px;
    height: 36px;
    padding: 6px 3px 0 8px;
    border-bottom: 1px solid #999;
}
.browse svg {
    width: 18px;
    height: 18px;
}
.browse .home svg {
    width: 20px;
    height: 20px;
}
.browse .combo {
    flex: 1;
    height: 27px;
    margin-left: -3px;
}
.focused::before {
    content: "";
    position: absolute;
    left: 5px;
    right: 26px;
    bottom: 2px;
    border-bottom: 1px solid #000;
}
.list {
    display: flex;
    justify-content: space-between;
    overflow: hidden;
    background-color: #fff;
}
.colors {
    flex: 1;
}
.swatches {
    display: grid;
    grid-template-columns: repeat(3, 62px);
    grid-auto-rows: 62px;
    gap: 2px;
    padding: 2px 3px;
}
.swatches button {
    padding: 1px;
    border: 1px solid #999;
    background-color: #fff;
    background-clip: content-box;
}
.folders {
    flex: none;
    height: 33px;
}
.folders svg {
    width: 40px;
    height: 40px;
    margin: 0 auto;
}
.scrollbar {
    display: flex;
    flex: none;
    flex-direction: column;
    align-items: center;
    width: 19px;
    background-color: #f1f1f1;
}
.scrollbar.outer {
    width: 20px;
}
.scrollbar svg {
    flex: none;
    width: 12px;
    height: 21px;
}
.scrollbar .thumb {
    width: 19px;
    height: 21px;
    background-color: #cdcdcd;
}
.scrollbar .thumb + svg {
    margin-top: auto;
}
.subtitle {
    flex: none;
    height: 30px;
    margin-top: 2px;
    border-top: 2px solid #777;
    border-bottom: 1px solid #999;
    padding-left: 4px;
    background: linear-gradient(#f1f1f1 4px, #999 4px, #999 5px, #e4e4e4 5px);
    font-size: 12px;
    line-height: 32px;
}
.swatches .c1 { background-color: #fbcfce; }
.swatches .c2 { background-color: #f99c9c; }
.swatches .c3 { background-color: #f56767; }
.swatches .c4 { background-color: #f33636; }
.swatches .c5 { background-color: #ec0404; }
.swatches .c6 { background-color: #cc0000; }
.swatches .c7 { background-color: #990003; }
.swatches .c8 { background-color: #660003; }
.swatches .c9 { background-color: #fcdacc; }
.swatches .c10 { background-color: #f9b198; }
.swatches .c11 { background-color: #f98f66; }
.swatches .c12 { background-color: #f66a32; }
.swatches .c13 { background-color: #f04305; }
.swatches .c14 { background-color: #cf370a; }
.swatches .c15 { background-color: #982a08; }
.swatches .c16 { background-color: #661c04; }
.swatches .c17 { background-color: #fee6ce; }
.swatches .c18 { background-color: #fbcf9a; }

/* status bar */
.statusbar {
    display: flex;
    align-items: center;
    flex: none;
    gap: 15px;
    height: 29px;
    padding: 4px 5px 0 6px;
    background-color: #f1f1f1;
    font-size: 17px;
    line-height: 16px;
}
.statusbar svg {
    width: 20px;
    height: 20px;
}
.statusbar p {
    flex: 1;
    margin-left: -3px;
    padding-left: 10px;
    border-left: 1px solid #888;
}
.statusbar label {
    padding-left: 10px;
    border-left: 1px solid #888;
    font-size: 16px;
}
.statusbar input {
    align-self: stretch;
    width: 250px;
    margin-left: -6px;
    padding: 0 4px;
    border: 1px solid #a9bacb;
    border-bottom: none;
    font: inherit;
    font-size: 16px;
}
```
